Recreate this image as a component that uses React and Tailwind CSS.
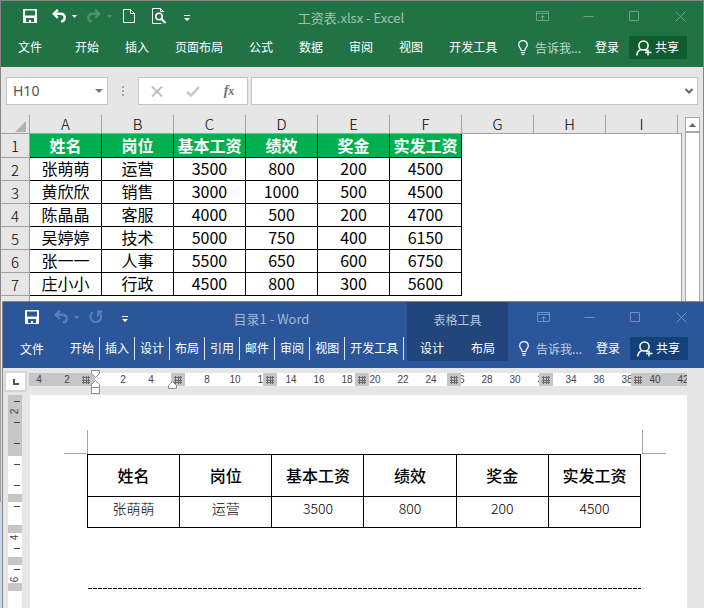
const employees = [
    ["张萌萌", "运营", 3500, 800, 200, 4500],
    ["黄欣欣", "销售", 3000, 1000, 500, 4500],
    ["陈晶晶", "客服", 4000, 500, 200, 4700],
    ["吴婷婷", "技术", 5000, 750, 400, 6150],
    ["张一一", "人事", 5500, 650, 600, 6750],
    ["庄小小", "行政", 4500, 800, 300, 5600],
];
const headers = ["姓名", "岗位", "基本工资", "绩效", "奖金", "实发工资"];
const columns = ["A", "B", "C", "D", "E", "F", "G", "H", "I"];
const excelTabs = ["开始", "插入", "页面布局", "公式", "数据", "审阅", "视图", "开发工具"];
const wordTabs = ["开始", "插入", "设计", "布局", "引用", "邮件", "审阅", "视图", "开发工具"];
const rulerNumbers = ["2", "", "2", "4", "6", "8", "10", "12", "14", "16", "18", "20", "22", "24", "26", "28", "30", "32", "34", "36", "38", "40", "42"];
const sideRuler = ["2", "", "", "", "", "", "4", "", "6"];

function SaveIcon() {
    return (
        <svg width="14" height="14" viewBox="0 0 14 14" className="shrink-0">
            <path fillRule="evenodd" fill="currentColor" d="M0 0h14v14H0zM2 1.5v5h10v-5zM3 9v4h3v-2h2v2h3V9z" />
        </svg>
    );
}

function UndoIcon() {
    return (
        <svg width="14" height="14" viewBox="0 0 14 14" fill="none" stroke="currentColor" strokeWidth="2.4">
            <path d="M5.8 .8L1.8 4.8l4 4M2 4.8h6.5c5.5 0 5.5 7.2 .5 7.7" />
        </svg>
    );
}

function RepeatIcon() {
    return (
        <svg width="14" height="14" viewBox="0 0 14 14" fill="none" stroke="currentColor" strokeWidth="2">
            <path d="M4 2A5.4 5.4 0 1 0 10 2.2M9 6.5V1.5h4.5" />
        </svg>
    );
}

function Caret() {
    return (
        <svg width="5" height="3" viewBox="0 0 5 3" fill="currentColor">
            <path d="M0 0h5L2.5 3z" />
        </svg>
    );
}

function CustomizeIcon() {
    return (
        <svg width="6" height="6" viewBox="0 0 6 6" fill="currentColor">
            <path d="M0 0h6v1H0zM0 3h6L3 6z" />
        </svg>
    );
}

function PageIcon() {
    return (
        <svg width="12" height="14" viewBox="0 0 12 14" fill="none" stroke="currentColor">
            <path d="M.5 .5h7l4 4v9H.5zM7.5 .5v4h4" />
        </svg>
    );
}

function PreviewIcon() {
    return (
        <svg width="14" height="16" viewBox="0 0 14 16" fill="none" stroke="currentColor">
            <path d="M11.5 4V3.5l-3-3h-8v15h9M8.5 .5v3h3" />
            <circle cx="7" cy="8.5" r="3.2" strokeWidth="1.6" />
            <path d="M9.5 11l4 4" strokeWidth="2.2" />
        </svg>
    );
}

function BulbIcon() {
    return (
        <svg width="10" height="15" viewBox="0 0 10 15" fill="none" stroke="currentColor" strokeWidth="1.2" className="shrink-0">
            <path d="M3.2 10.5C3.2 8 .7 7.5 .7 4.7a4.3 4.1 0 0 1 8.6 0C9.3 7.5 6.8 8 6.8 10.5zM3 12.5h4M3.5 14.3h3" />
        </svg>
    );
}

function PersonIcon() {
    return (
        <svg width="16" height="16" viewBox="0 0 16 16" fill="none" stroke="currentColor" strokeWidth="1.5">
            <circle cx="7.5" cy="5.5" r="4.6" />
            <path d="M.8 15.5c0-3 1.7-5 4.4-6M9 9.5l2 1.5M12 9.500v6M9 12.5h6.5" />
        </svg>
    );
}

function GridMark() {
    return (
        <svg width="8" height="8" viewBox="0 0 8 8" stroke="#6a6a6a" shapeRendering="crispEdges">
            <path d="M0 1.5h8M0 4.5h8M0 6.5h8M1.5 0v8M4.5 0v8M6.5 0v8" />
        </svg>
    );
}

function WindowControls({ color }) {
    const icons = [
        ["功能区显示选项", "M.5 .5h12v9H.5zM.5 2.5h12M6.5 9V4.5M4.5 6.5l2-2 2 2"],
        ["最小化", "M1.5 5.5h10"],
        ["最大化", "M1.5 .5h9v9h-9z"],
        ["关闭", "M1.5 .5l10 10M11.5 .5l-10 10"],
    ];
    return (
        <div className={`flex h-[30px] justify-end ${color}`}>
            {icons.map(([label, d]) => (
                <button key={label} aria-label={label} className="flex w-[46px] items-center justify-center">
                    <svg width="13" height="11" viewBox="0 0 13 11" fill="none" stroke="currentColor">
                        <path d={d} />
                    </svg>
                </button>
            ))}
        </div>
    );
}

function AccountRow({ hint, share }) {
    return (
        <div className="flex h-[33px] items-center justify-end pr-4 text-xs whitespace-nowrap">
            <button className={`mr-3.5 flex items-center gap-[7px] ${hint}`}>
                <span className="text-white"><BulbIcon /></span>
                告诉我...
            </button>
            <button className="mr-2.5 pb-0.5">登录</button>
            <button className={`flex h-[23px] w-[58px] items-center gap-[3px] pl-[7px] ${share}`}>
                <PersonIcon />
                <span className="pb-0.5">共享</span>
            </button>
        </div>
    );
}

function ExcelHeader() {
    return (
        <header className="flex bg-[#217346] pb-[3px] text-white">
            <div className="min-w-0 flex-1">
                <div className="flex h-[30px] items-center pl-[22px]">
                    <button aria-label="保存"><SaveIcon /></button>
                    <button aria-label="撤消" className="ml-[15px] flex items-center gap-1.5"><UndoIcon /><Caret /></button>
                    <button aria-label="恢复" className="ml-2.5 flex items-center gap-1.5 text-[#4f9170]">
                        <span className="-scale-x-100"><UndoIcon /></span>
                        <Caret />
                    </button>
                    <button aria-label="新建" className="ml-[11px]"><PageIcon /></button>
                    <button aria-label="打印预览" className="ml-[17px]"><PreviewIcon /></button>
                    <button aria-label="自定义快速访问工具栏" className="mt-1 ml-[18px]"><CustomizeIcon /></button>
                    <h1 className="flex-1 pt-1 text-center text-[13px] leading-5 whitespace-nowrap text-[#a0c4b0]">工资表.xlsx - Excel</h1>
                </div>
                <nav className="flex h-[33px] items-center pb-0.5 pl-[17px] text-xs whitespace-nowrap">
                    <button className="mr-[33px]">文件</button>
                    <div className="flex gap-[26px]">
                        {excelTabs.map((tab) => <button key={tab}>{tab}</button>)}
                    </div>
                </nav>
            </div>
            <div className="w-[191px] shrink-0">
                <WindowControls color="text-[#6ba385]" />
                <AccountRow hint="text-[#c2dacb]" share="bg-[#0f5c2f]" />
            </div>
        </header>
    );
}

function FormulaBar() {
    return (
        <div className="flex px-[5px] py-2.5">
            <div className="flex h-7 w-[102px] items-center border border-[#c6c6c6] bg-white pr-1">
                <input aria-label="名称框" defaultValue="H10" className="w-full min-w-0 pl-1.5 font-['Noto_Sans'] text-sm text-[#555] outline-none" />
                <button aria-label="名称列表" className="text-[#777]">
                    <svg width="8" height="4" viewBox="0 0 8 4" fill="currentColor"><path d="M0 0h8L4 4z" /></svg>
                </button>
            </div>
            <div className="flex w-[30px] flex-col items-center justify-center gap-0.5">
                <span className="size-0.5 bg-[#a8a8a8]" />
                <span className="size-0.5 bg-[#a8a8a8]" />
                <span className="size-0.5 bg-[#a8a8a8]" />
            </div>
            <div className="mr-[3px] grid w-[110px] grid-cols-3 border border-[#c6c6c6] bg-white">
                <button aria-label="取消" className="flex items-center justify-center text-[#bdbdbd]">
                    <svg width="12" height="11" viewBox="0 0 12 11" fill="none" stroke="currentColor" strokeWidth="1.8"><path d="M1 .5l10 10M11 .5l-10 10" /></svg>
                </button>
                <button aria-label="输入" className="flex items-center justify-center text-[#c6c6c6]">
                    <svg width="14" height="11" viewBox="0 0 14 11" fill="none" stroke="currentColor" strokeWidth="2.5"><path d="M1 6l4 3.5L13 1" /></svg>
                </button>
                <button className="font-['Liberation_Serif'] text-sm leading-none font-bold text-[#707070] italic">
                    f<span className="text-xs">x</span>
                </button>
            </div>
            <div className="flex flex-1 items-center border border-[#c6c6c6] bg-white pr-1">
                <input aria-label="编辑栏" className="w-full min-w-0 outline-none" />
                <button aria-label="展开编辑栏">
                    <svg width="8" height="6" viewBox="0 0 8 6" fill="none" stroke="#666" strokeWidth="2"><path d="M.5 1L4 4.5 7.5 1" /></svg>
                </button>
            </div>
        </div>
    );
}

function Sheet() {
    return (
        <div className="flex">
            <table className="flex-1 table-fixed border-separate border-spacing-0 text-center text-base leading-5 text-black">
                <colgroup>
                    <col className="w-[29px]" />
                    {columns.map((c) => <col key={c} className="w-[72px]" />)}
                    <col />
                </colgroup>
                <thead>
                    <tr className="h-[19px]">
                        <th className="border-r border-b border-[#a0a0a0] p-0">
                            <svg width="11" height="11" viewBox="0 0 11 11" className="mt-1 ml-[14px] block"><path d="M11 0v11H0z" fill="#b2b2b2" /></svg>
                        </th>
                        {columns.map((c) => (
                            <th key={c} className="border-r border-b border-[#a0a0a0] p-0 text-[15px] leading-[18px] font-light">{c}</th>
                        ))}
                        <th className="border-b border-[#a0a0a0] p-0" />
                    </tr>
                </thead>
                <tbody>
                    <tr className="h-6">
                        <th className="border-r border-b border-[#a0a0a0] p-0 text-[15px] font-light">1</th>
                        {headers.map((h) => (
                            <th key={h} className="border-r border-b border-black bg-[#00b050] p-0 pb-0.5 font-bold whitespace-nowrap text-white">{h}</th>
                        ))}
                        <td rowSpan={8} colSpan={4} className="border-r border-[#a0a0a0] bg-white p-0" />
                    </tr>
                    {employees.map((row, i) => (
                        <tr key={row[0]} className="h-[23px]">
                            <th className="border-r border-b border-[#a0a0a0] p-0 pt-0.5 text-[15px] font-light">{i + 2}</th>
                            {row.map((cell, j) => (
                                <td key={j} className="border-r border-b border-black bg-white p-0 pb-0.5">{cell}</td>
                            ))}
                        </tr>
                    ))}
                    <tr className="h-[5px]">
                        <th className="border-r border-[#a0a0a0] p-0" />
                        <td colSpan={6} className="bg-white p-0" />
                    </tr>
                </tbody>
            </table>
            <div className="mr-[3px] ml-[3px] flex w-[15px] flex-col pt-0.5">
                <button aria-label="向上滚动" className="flex h-[15px] items-center justify-center border border-[#a8a8a8] bg-white">
                    <svg width="7" height="4" viewBox="0 0 7 4" fill="#666"><path d="M0 4h7L3.5 0z" /></svg>
                </button>
                <div className="flex-1 border border-b-0 border-[#a8a8a8] bg-white" />
            </div>
        </div>
    );
}

function WordHeader() {
    return (
        <header className="flex bg-[#2b579a] pb-[3px] text-white">
            <div className="min-w-0 flex-1">
                <div className="flex h-[30px] items-center pl-[22px]">
                    <button aria-label="保存"><SaveIcon /></button>
                    <button aria-label="撤消" className="ml-[15px] flex items-center gap-1.5 text-[#5b7db3]"><UndoIcon /><Caret /></button>
                    <button aria-label="重复" className="ml-2.5 text-[#5b7db3]"><RepeatIcon /></button>
                    <button aria-label="自定义快速访问工具栏" className="mt-1 ml-[19px]"><CustomizeIcon /></button>
                    <h2 className="flex-1 pt-1 pl-2 text-center text-[13px] leading-5 text-[#a3b7d6]">目录1 - Word</h2>
                </div>
                <nav className="flex h-[33px] items-center pl-[17px] text-xs whitespace-nowrap">
                    <button className="mr-[21px]">文件</button>
                    {wordTabs.map((tab) => (
                        <button key={tab} className="h-[23px] border-r border-[#dfe6f1] px-[5px] pb-0.5">{tab}</button>
                    ))}
                </nav>
            </div>
            <div className="h-[59px] w-[101px] shrink-0 bg-[#22457b] text-xs">
                <p className="h-[30px] pt-2.5 text-center leading-4 text-[#b3c3dc]">表格工具</p>
                <div className="flex h-[33px] items-center justify-between px-[13px] pb-0.5">
                    <button>设计</button>
                    <button>布局</button>
                </div>
            </div>
            <div className="w-[196px] shrink-0">
                <WindowControls color="text-[#7290c0]" />
                <AccountRow hint="text-[#c3d0e5]" share="bg-[#124078]" />
            </div>
        </header>
    );
}

function Ruler() {
    return (
        <div className="flex h-[27px] items-start pt-[5px] pr-[17px]">
            <button aria-label="制表符" className="mr-1 ml-[3px] flex h-[17px] w-[19px] items-center justify-center bg-white outline-2 outline-[#d6d6d6]">
                <span className="size-[6px] border-b-2 border-l-2 border-[#555]" />
            </button>
            <div className="relative h-[13px] min-w-0 flex-1">
                <div className="flex h-full">
                    <div className="w-[66px] bg-[#c6c6c6]" />
                    <div className="flex-1 bg-white" />
                    <div className="w-[54px] bg-[#c6c6c6]" />
                </div>
                <div className="absolute inset-0 flex overflow-hidden text-center font-['Liberation_Sans'] text-[10px] leading-[13px] text-[#444]">
                    <span className="w-6 shrink-0 pr-1">4</span>
                    {rulerNumbers.map((n, i) => <span key={i} className="w-7 shrink-0">{n}</span>)}
                </div>
                <div className="absolute inset-y-0 left-[50px] flex gap-[78px]">
                    {[0, 1, 2, 3, 4, 5, 6].map((n) => (
                        <span key={n} className="flex w-[14px] items-center justify-center bg-[#c6c6c6]"><GridMark /></span>
                    ))}
                </div>
                <svg width="9" height="25" viewBox="0 0 9 25" fill="#fff" stroke="#8a8a8a" className="absolute -top-[3px] left-[62px]">
                    <path d="M.5 .5h8v3l-4 4-4-4zM.5 17.5v-3l4-4 4 4v3zM.5 17.5h8v6h-8z" />
                </svg>
                <svg width="9" height="8" viewBox="0 0 9 8" fill="#fff" stroke="#8a8a8a" className="absolute top-2 left-[139px]">
                    <path d="M.5 7.5v-3l4-4 4 4v3z" />
                </svg>
            </div>
        </div>
    );
}

function SideRuler() {
    return (
        <div className="relative mr-2 ml-[5px] flex w-[14px] shrink-0 flex-col bg-white">
            <div className="h-[61px] bg-[#c6c6c6]" />
            <div className="mt-[38px] h-2 bg-[#c6c6c6]" />
            <div className="mt-[23px] h-2 bg-[#c6c6c6]" />
            <div className="mt-6 h-2 bg-[#c6c6c6]" />
            <div className="mt-[18px] h-2 bg-[#c6c6c6]" />
            <div className="absolute inset-x-0 top-1.5 flex flex-col font-['Liberation_Sans'] text-[10px] text-[#444]">
                {sideRuler.map((n, i) => (
                    <div key={i} className="relative flex h-[21px] items-center justify-center">
                        {i !== 6 && <span className="absolute top-0 right-0.5 h-px w-1.5 bg-[#444]" />}
                        <span className="-rotate-90">{n}</span>
                    </div>
                ))}
            </div>
        </div>
    );
}

function DocumentPage() {
    return (
        <article className="flex-1 bg-white pt-[35px] pb-[19px] text-black">
            <div className="flex h-6 justify-between pr-[21px] pl-[34px]">
                <span className="w-6 border-r border-b border-[#a6a6a6]" />
                <span className="w-6 border-b border-l border-[#a6a6a6]" />
            </div>
            <div className="pr-[46px] pl-[57px]">
                <table className="w-full table-fixed border-separate border-spacing-0 border-t border-l border-black text-center">
                    <thead>
                        <tr className="h-[42px]">
                            {headers.map((h) => (
                                <th key={h} className="border-r border-b border-black p-0 pb-0.5 text-base leading-5 font-medium whitespace-nowrap">{h}</th>
                            ))}
                        </tr>
                    </thead>
                    <tbody>
                        <tr className="h-[31px]">
                            {employees[0].map((cell, i) => (
                                <td key={i} className="border-r border-b border-black p-0 pt-px align-top text-sm leading-5 font-light">{cell}</td>
                            ))}
                        </tr>
                    </tbody>
                </table>
                <div className="mt-[60px] ml-px h-px bg-[repeating-linear-gradient(90deg,#000_0_4px,#fff_4px_5px)]" />
            </div>
        </article>
    );
}

export default function App() {
    return (
        <div className="min-h-screen bg-[#e6e6e6] font-['Noto_Sans_CJK_SC',sans-serif]">
            <section className="border-x border-t border-[#868686] bg-[#e6e6e6]">
                <ExcelHeader />
                <FormulaBar />
                <Sheet />
            </section>
            <div className="flex">
                <div className="flex w-0.5 shrink-0 flex-col">
                    <div className="h-[201px] border-l border-[#999]" />
                    <div className="flex-1 bg-[#c9d5ee]" />
                </div>
                <section className="min-w-0 flex-1 border-t border-l border-[#868686] bg-[#e6e6e6]">
                    <WordHeader />
                    <Ruler />
                    <div className="flex pr-[17px]">
                        <SideRuler />
                        <DocumentPage />
                    </div>
                </section>
            </div>
        </div>
    );
}
